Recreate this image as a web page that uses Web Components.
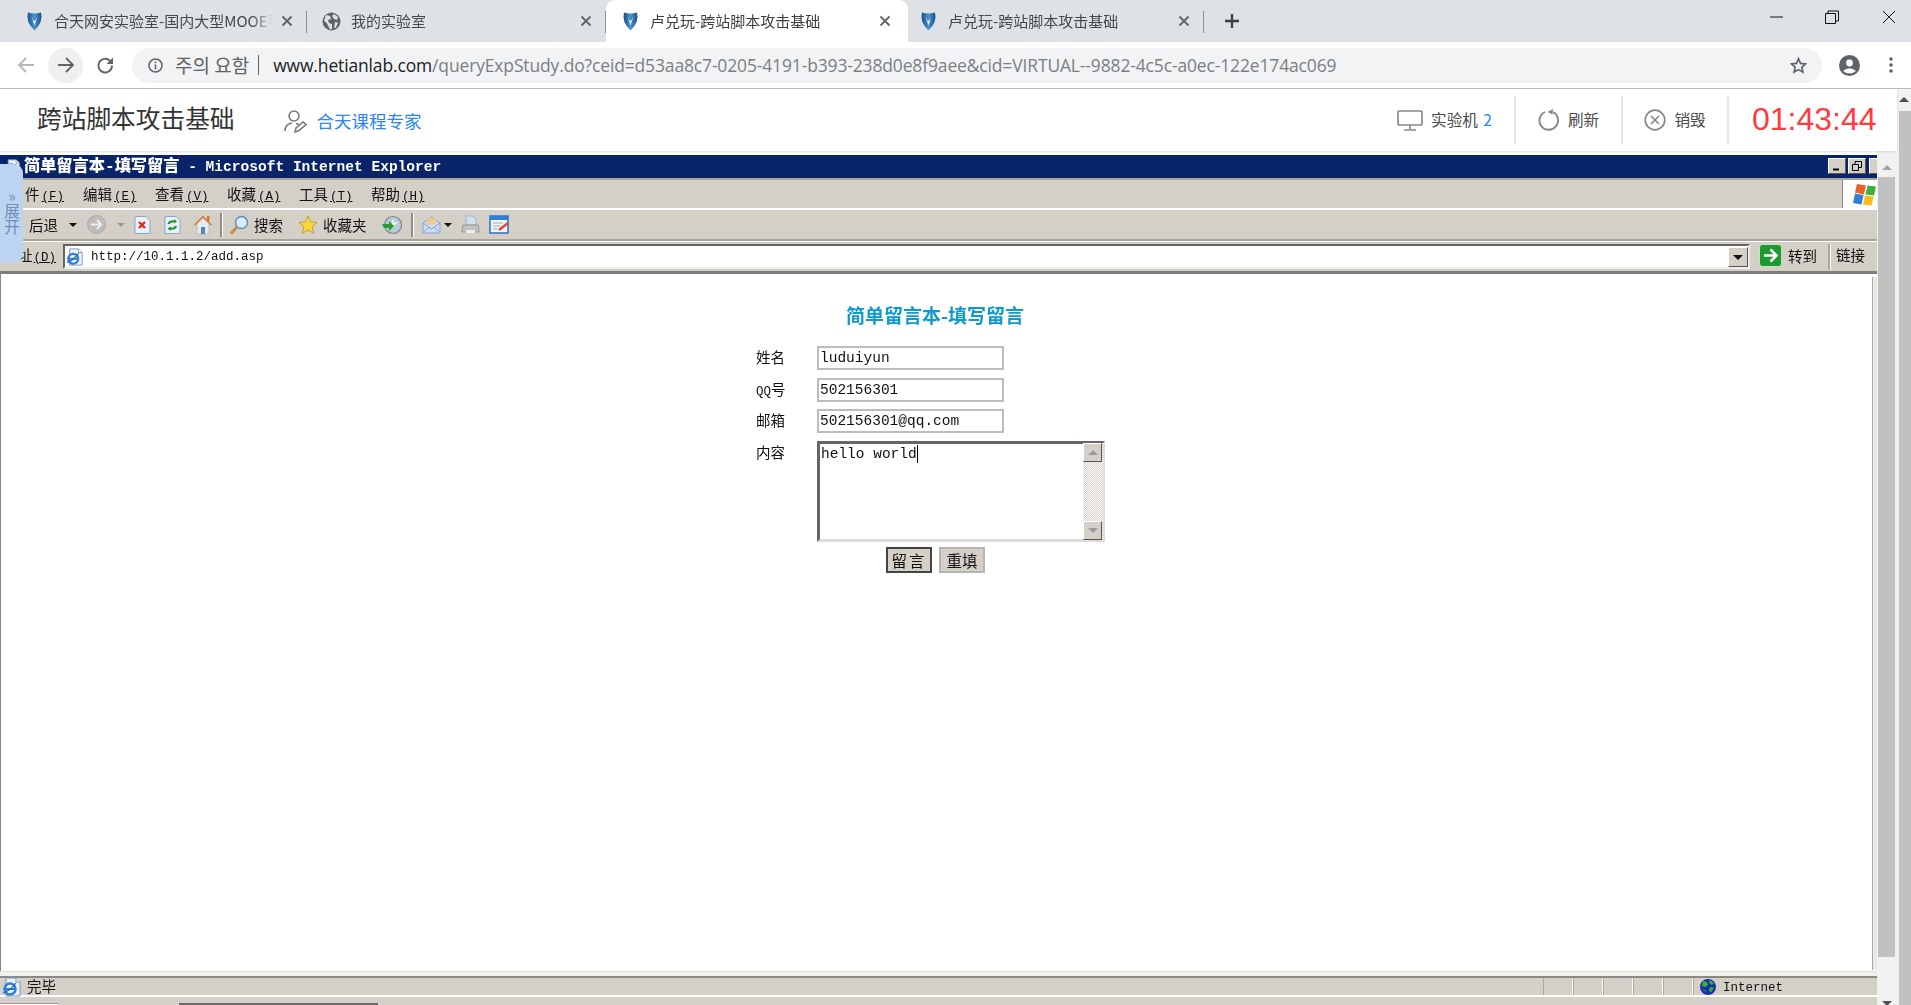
<!DOCTYPE html>
<html lang="zh"><head><meta charset="utf-8"><title>跨站脚本攻击基础</title>
<style>
html,body{margin:0;padding:0;height:1005px;overflow:hidden;background:#fff}
body{font-family:"Noto Sans CJK SC","Noto Sans",sans-serif;display:flex;flex-direction:column}
</style></head><body>
<browser-tabs></browser-tabs>
<browser-bar></browser-bar>
<page-body></page-body>
<script>
const SANS='"Noto Sans CJK SC","Noto Sans",sans-serif';
const MONO='"Liberation Mono","Noto Sans CJK SC",monospace';
const shield=`<svg width="19" height="20" viewBox="0 0 19 20"><defs><linearGradient id="g" x1="0" x2="1"><stop offset="0" stop-color="#174f86"/><stop offset=".5" stop-color="#4f93c9"/><stop offset="1" stop-color="#174f86"/></linearGradient></defs><path d="M3 1.5Q9.500 3.500 16 1.500Q18.500 11 9.500 19.500Q.5 11 3 1.500Z" fill="url(#g)"/><path d="M6.500 5L9.500 14.500L12.500 5L10.500 9.500H8.500Z" fill="#e8f2fa"/></svg>`;
const close=`<svg width="12" height="12" viewBox="0 0 12 12"><path d="M1.500 1.500L10.500 10.500M10.500 1.500L1.500 10.500" stroke="#5f6368" stroke-width="1.800"/></svg>`;
const globe=`<svg width="19" height="19" viewBox="0 0 19 19"><circle cx="9.500" cy="9.500" r="9" fill="#5f6368"/><path d="M4 3l4 1 1 3-3 1 1 3 3 1v5l-2 .5-3-6-3-3zM12 2l4 3-1 3-3-1-2-3zM13 10l3 .5-2 5-2 .5z" fill="#dee1e6"/></svg>`;
const ieE=(s)=>`<svg width="${s}" height="${s}" viewBox="0 0 20 20"><path d="M4 1h10l4 4v14H4z" fill="#eaf2fb" stroke="#7f93b5"/><path d="M14 1v4h4" fill="#fff" stroke="#7f93b5"/><circle cx="8" cy="12" r="5.500" fill="none" stroke="#2b7fd8" stroke-width="2.500"/><path d="M3 12h10" stroke="#2b7fd8" stroke-width="2"/><path d="M1 16Q8 14 14 6" stroke="#1d5fb5" fill="none" stroke-width="1.200"/></svg>`;
function def(name,css,html,after){
  customElements.define(name,class extends HTMLElement{
    constructor(){super();const r=this.attachShadow({mode:'open'});
      r.innerHTML=`<style>${css}</style>${typeof html==='function'?html(this):html}`;}
  });
}

def('tab-item',`
:host{display:flex;align-items:center;box-sizing:border-box;height:42px;position:relative;color:#45484c;font:15px ${SANS};flex:none}
:host([active]){background:#fff;border-radius:9px 9px 0 0;color:#3c4043}
.t{flex:1;margin-left:10px;white-space:nowrap;overflow:hidden;-webkit-mask-image:linear-gradient(90deg,#000 90%,transparent 100%);mask-image:linear-gradient(90deg,#000 90%,transparent 100%);line-height:20px;padding-bottom:1px}
.c{flex:none;width:12px;height:12px;display:flex;margin-left:8px}
.s{position:absolute;right:0;top:11px;height:22px;width:1px;background:#8d9094}
`,h=>`${h.hasAttribute('globe')?globe:shield}<span class="t"><slot></slot></span><span class="c">${close}</span>${h.hasAttribute('sep')?'<span class="s"></span>':''}`);

def('browser-tabs',`
:host{display:flex;height:42px;background:#dee1e6;flex:none;align-items:stretch}
.plus{width:20px;height:20px;margin:11px 0 0 18px}
.sp{flex:1}
.w{display:flex;align-items:center;justify-content:center;padding-bottom:8px;box-sizing:border-box;height:42px;flex:none}
`,`
<tab-item sep style="width:307px;padding:0 14px 0 25px">合天网安实验室-国内大型MOOE平台</tab-item>
<tab-item sep globe style="width:299px;padding:0 14px 0 15px">我的实验室</tab-item>
<tab-item active style="width:302px;padding:0 17px 0 15px">卢兑玩-跨站脚本攻击基础</tab-item>
<tab-item sep style="width:296px;padding:0 14px 0 11px">卢兑玩-跨站脚本攻击基础</tab-item>
<svg class="plus" viewBox="0 0 20 20"><path d="M10 3v14M3 10h14" stroke="#3c4043" stroke-width="2.300"/></svg>
<span class="sp"></span>
<span class="w" style="width:42px"><svg width="14" height="14" viewBox="0 0 14 14"><path d="M1 7H14" stroke="#111"/></svg></span>
<span class="w" style="width:70px"><svg width="14" height="14" viewBox="0 0 14 14"><path d="M.5 3.500h10v10H.5zM3 3.500V1h10.500v10H10.500" fill="none" stroke="#111"/></svg></span>
<span class="w" style="width:44px"><svg width="14" height="14" viewBox="0 0 14 14"><path d="M1 1L13 13M13 1L1 13" stroke="#111"/></svg></span>
`);

def('browser-bar',`
:host{display:flex;align-items:center;height:47px;box-sizing:border-box;border-bottom:1px solid #b9babb;background:#fff;flex:none;padding-bottom:0}
.btn{flex:none;display:flex;align-items:center;justify-content:center;width:35px;height:35px}
.fw{background:#efefef;border-radius:50%}
.omni{flex:none;width:1690px;height:35px;margin-left:9px;border-radius:18px;background:#f1f3f4;display:flex;align-items:center;box-sizing:border-box;padding-left:16px;position:relative}
.warn{font:19px "Noto Sans CJK KR",sans-serif;color:#5f6368;margin-left:12px;white-space:nowrap;line-height:20px}
.bar{width:1px;height:20px;background:#5f6368;margin:0 14px 0 9px}
.url{font:17.460px "Open Sans","Noto Sans",sans-serif;color:#7b7f84;white-space:nowrap;line-height:22px;letter-spacing:-.12px}
.url b{font-weight:400;color:#202124}
.star{position:absolute;right:15px;top:9px}
.p{margin-left:17px;flex:none}
.d{margin-left:29px;flex:none}
`,`
<span class="btn" style="margin-left:8px"><svg width="18" height="18" viewBox="0 0 18 18"><path d="M17 9H2M9 2L2 9l7 7" fill="none" stroke="#b5b7ba" stroke-width="1.800"/></svg></span>
<span class="btn fw" style="margin-left:5px"><svg width="18" height="18" viewBox="0 0 18 18"><path d="M1 9h15M9 2l7 7-7 7" fill="none" stroke="#5f6368" stroke-width="1.800"/></svg></span>
<span class="btn" style="margin-left:5px"><svg width="19" height="19" viewBox="0 0 19 19"><path d="M16 9.500A6.800 6.800 0 1 1 14 4.800" fill="none" stroke="#5f6368" stroke-width="1.900"/><path d="M17 1.500V8H10.500z" fill="#5f6368"/></svg></span>
<div class="omni">
<svg width="15" height="15" viewBox="0 0 15 15"><circle cx="7.500" cy="7.500" r="6.500" fill="none" stroke="#5f6368" stroke-width="1.500"/><path d="M7.500 6.500v5M7.500 3.500v1.800" stroke="#5f6368" stroke-width="1.600"/></svg>
<span class="warn">주의 요함</span><span class="bar"></span>
<span class="url"><b>www.hetianlab.com</b>/queryExpStudy.do?ceid=d53aa8c7-0205-4191-b393-238d0e8f9aee&amp;cid=VIRTUAL--9882-4c5c-a0ec-122e174ac069</span>
<svg class="star" width="17" height="17" viewBox="0 0 24 24"><path d="M12 2.500l2.900 6.500 7.100.7-5.300 4.700 1.500 7-6.200-3.600-6.200 3.600 1.500-7L2 9.700l7.100-.7z" fill="none" stroke="#5f6368" stroke-width="2.400"/></svg>
</div>
<svg class="p" width="21" height="21" viewBox="0 0 21 21"><circle cx="10.500" cy="10.500" r="10.500" fill="#5f6368"/><circle cx="10.500" cy="8" r="3.400" fill="#fff"/><path d="M4 16q6.500-5.500 13 0q-6.500 5-13 0z" fill="#fff"/></svg>
<svg class="d" width="4" height="18" viewBox="0 0 4 18"><circle cx="2" cy="3" r="1.800" fill="#5f6368"/><circle cx="2" cy="9" r="1.800" fill="#5f6368"/><circle cx="2" cy="15" r="1.800" fill="#5f6368"/></svg>
`);

def('lab-action',`
:host{display:flex;align-items:center;justify-content:center;box-sizing:border-box;height:48px;font:15.600px ${SANS};color:#4a4a4a;border-right:2px solid #e6e6e6;gap:8px;white-space:nowrap;flex:none}
span{margin-top:-2px}
`,`<slot name="i"></slot><span><slot></slot></span>`);

def('lab-header',`
:host{display:flex;align-items:center;height:62px;flex:none;background:#fff;box-sizing:border-box;padding-left:37px;box-shadow:0 1px 2px rgba(0,0,0,.12);position:relative;z-index:1}
.title{font:24.700px/30px ${SANS};color:#333;white-space:nowrap;margin-top:-6px}
.exp{margin-left:49px;display:flex;align-items:center;gap:10px;color:#2a85f5;font:17.500px/22px ${SANS};white-space:nowrap;padding-top:2px}
.sp{flex:1}
.time{width:168px;box-sizing:border-box;padding-left:23px;color:#ff3b3f;font:32px/34px "Liberation Sans",Arial,sans-serif;white-space:nowrap;margin-top:-2px}
.two{color:#2a85f5;margin-left:2px}
`,`
<span class="title">跨站脚本攻击基础</span>
<span class="exp"><svg width="23" height="24" viewBox="0 0 23 24"><circle cx="10" cy="7" r="5" fill="none" stroke="#777" stroke-width="1.500"/><path d="M1 22q0-7 7-8M12 14.500q2 .5 3 1.500" fill="none" stroke="#777" stroke-width="1.500"/><path d="M11 23l1-4 7-6 3 2.500-7 6z" fill="none" stroke="#777" stroke-width="1.500"/></svg>合天课程专家</span>
<span class="sp"></span>
<lab-action style="width:141px"><svg slot="i" width="26" height="21" viewBox="0 0 26 21"><rect x="1" y="1" width="24" height="14" rx="1" fill="none" stroke="#888" stroke-width="1.700"/><path d="M13 15v4M7 20h12" stroke="#888" stroke-width="1.700"/></svg>实验机 <span class="two">2</span></lab-action>
<lab-action style="width:107px"><svg slot="i" width="22" height="22" viewBox="0 0 22 22"><path d="M15 3.200A9.300 9.300 0 1 1 7 3" fill="none" stroke="#888" stroke-width="1.900"/><path d="M15 0l-.5 5.500L9.500 3z" fill="#888"/></svg>刷新</lab-action>
<lab-action style="width:106px"><svg slot="i" width="22" height="22" viewBox="0 0 22 22"><circle cx="11" cy="11" r="9.800" fill="none" stroke="#888" stroke-width="1.700"/><path d="M7 7l8 8M15 7l-8 8" stroke="#888" stroke-width="1.700"/></svg>销毁</lab-action>
<span class="time">01:43:44</span>
`);

def('scroll-rail',`
:host{display:block;background:#f1f1f1;flex:none;position:relative;box-sizing:border-box}
.up,.down{width:0;height:0;position:absolute;left:50%;margin-left:-5px;border:5px solid transparent;border-top:0}
.up{border-bottom:5px solid var(--arrow,#a3a3a3);top:var(--up,13px)}
.down{border:5px solid transparent;border-bottom:0;border-top:5px solid #505050;bottom:-1px}
.thumb{position:absolute;background:#c1c1c1;top:var(--top);bottom:var(--bottom);left:var(--l);right:var(--r)}
`,h=>`<div class="up"></div><div class="thumb"></div>${h.hasAttribute('down')?'<div class="down"></div>':''}`);

def('ie-title',`
:host{display:flex;align-items:center;height:23px;background:#0a246a;color:#fff;font:bold 14.550px/20px ${MONO};white-space:pre;flex:none;padding-left:5px;box-sizing:border-box;position:relative}
.txt{margin-left:3px}
.txt b{font-size:16.200px}
.b{position:absolute;top:3px;width:18px;height:16px;background:#d4d0c8;border:1px solid;border-color:#fff #555 #555 #fff;box-sizing:border-box;display:flex;align-items:center;justify-content:center}
`,`${ieE(16)}<span class="txt"><b>简单留言本-填写留言</b> - Microsoft Internet Explorer</span>
<span class="b" style="left:1828px"><svg width="10" height="10" viewBox="0 0 10 10"><path d="M1 8.500h6" stroke="#000" stroke-width="2"/></svg></span>
<span class="b" style="left:1848px"><svg width="10" height="10" viewBox="0 0 10 10"><path d="M.5 3.500h6v6h-6zM3 3V.5h6.500v6H7" fill="none" stroke="#000"/></svg></span>
<span class="b" style="left:1869px"></span>`);

def('ie-menu',`
:host{display:flex;align-items:center;height:32px;box-sizing:border-box;background:#d4d0c8;border-top:2px solid #a7a49d;border-bottom:2px solid #fff;flex:none;padding-left:25px;font:14.500px/20px ${SANS};color:#111;white-space:nowrap;position:relative}
span{margin-right:21px;width:51px}
span.f{width:37px}
u{font:12.500px ${MONO};margin-left:2px}
.logo{position:absolute;left:1842px;top:0;bottom:0;width:40px;background:#fff;display:flex;align-items:center;padding-left:10px;box-sizing:border-box;border-left:1px solid #888}
`,`<span class="f">件<u>(F)</u></span><span>编辑<u>(E)</u></span><span>查看<u>(V)</u></span><span>收藏<u>(A)</u></span><span>工具<u>(T)</u></span><span>帮助<u>(H)</u></span>
<div class="logo"><svg width="24" height="26" viewBox="0 0 24 26"><path d="M4 3l9 1.500-2 9-9-2z" fill="#e5602b"/><path d="M14.500 4.500l8.500 1-2 9-8.500-1z" fill="#3fae3b"/><path d="M2 12.500l8.500 1.500-2 9.500L0 22z" fill="#2f80d4"/><path d="M12 14.500l8.500 1-2 9-8.500-1z" fill="#f6bc1c"/></svg></div>`);

const tb={
 fw:`<svg width="19" height="19" viewBox="0 0 19 19"><circle cx="9.500" cy="9.500" r="9" fill="#bdbdb8" stroke="#aaa"/><path d="M4 9.500h10M10 5l4 4.500-4 4.500" fill="none" stroke="#eee" stroke-width="2"/></svg>`,
 stop:`<svg width="17" height="18" viewBox="0 0 17 18"><path d="M1 .5h11l4 4v13H1z" fill="#e9f1fb" stroke="#8ea5c9"/><path d="M5 6l6 6M11 6l-6 6" stroke="#dd2b1c" stroke-width="2.400"/></svg>`,
 ref:`<svg width="17" height="18" viewBox="0 0 17 18"><path d="M1 .5h11l4 4v13H1z" fill="#e9f1fb" stroke="#8ea5c9"/><path d="M4.500 8q1-3.500 6.500-2.500M12 10q-1 3.500-6.500 2.500" fill="none" stroke="#1c9a2c" stroke-width="2.200"/><path d="M10 3l3 2.500-3 2zM6.500 15l-3-2.500 3-2z" fill="#1c9a2c"/></svg>`,
 home:`<svg width="20" height="20" viewBox="0 0 20 20"><path d="M1 10L10 1l9 9" fill="#e88a35" stroke="#d77a2a"/><path d="M4 9l6-6 6 6v10H4z" fill="#e4ebf3" stroke="#a9b3c0" stroke-width=".700"/><rect x="8" y="12" width="4" height="7" fill="#5a83b8"/><rect x="14" y="1" width="2.500" height="5" fill="#d77a2a"/></svg>`,
 search:`<svg width="20" height="20" viewBox="0 0 20 20"><circle cx="12.500" cy="7.500" r="6" fill="#dcecfa" stroke="#5c8fbf" stroke-width="1.500"/><path d="M8 12L2 18.500" stroke="#c98a3a" stroke-width="3"/></svg>`,
 star:`<svg width="20" height="20" viewBox="0 0 20 20"><path d="M10 1l2.700 6 6.300.6-4.800 4.300 1.400 6.400L10 15l-5.600 3.300 1.400-6.400L1 7.600 7.300 7z" fill="#fbd63e" stroke="#c6a22e"/></svg>`,
 hist:`<svg width="20" height="20" viewBox="0 0 20 20"><circle cx="11" cy="10" r="8.500" fill="#b9cbd6" stroke="#7d8a86" stroke-width="1.200"/><path d="M11 5v5l4-3" stroke="#fff" stroke-width="1.500" fill="none"/><path d="M1 11h7v-3l5 5-5 5v-3H3z" fill="#2c9b36" transform="translate(-1 -2)"/></svg>`,
 mail:`<svg width="19" height="19" viewBox="0 0 19 19"><path d="M1 8L9.500 2 18 8v10H1z" fill="#c9dcf5" stroke="#8aa3d2"/><rect x="5" y="3.500" width="9" height="6" fill="#f4c98b"/><path d="M1 8l8.500 6L18 8M1 18l6-6M18 18l-6-6" fill="none" stroke="#8aa3d2"/></svg>`,
 print:`<svg width="19" height="19" viewBox="0 0 19 19"><path d="M5 1h7l3 3v6H5z" fill="#cfe0f3" stroke="#99a9bc" stroke-width=".800"/><path d="M2 10h15l1 4v3H1v-3z" fill="#c2c4c2" stroke="#8a8c8c" stroke-width=".800"/><rect x="5" y="15" width="9" height="3" fill="#eee"/></svg>`,
 edit:`<svg width="21" height="19" viewBox="0 0 21 19"><rect x="1" y="1" width="18" height="17" fill="#f2f5fa" stroke="#2a71c4" stroke-width="1.500"/><rect x="1" y="1" width="18" height="4" fill="#2a80d5"/><path d="M4 8h10M4 11h7M4 14h5" stroke="#9aa"/><path d="M10 15L19 8" stroke="#d8473a" stroke-width="2.500"/></svg>`
};
def('ie-toolbar',`
:host{display:flex;align-items:center;height:31px;box-sizing:border-box;background:#d4d0c8;border-bottom:2px solid #a7a49d;flex:none;padding-left:29px;font:14.500px/20px ${SANS};color:#111;white-space:nowrap}
.a{width:0;height:0;border:4px solid transparent;border-top:4px solid #111;border-bottom:0;flex:none}
.g{border-top-color:#9a9892}
.s{width:2px;height:24px;background:#8f8d87;border-right:1px solid #fff;flex:none}
svg{flex:none}
`,`<span>后退</span><i class="a" style="margin-left:11px"></i>
<span style="margin-left:10px;display:flex">${tb.fw}</span><i class="a g" style="margin-left:11px"></i>
<span style="margin-left:9px;display:flex">${tb.stop}</span><span style="margin-left:13px;display:flex">${tb.ref}</span>
<span style="margin-left:12px;display:flex">${tb.home}</span><i class="s" style="margin-left:7px"></i>
<span style="margin-left:6px;display:flex">${tb.search}</span><span style="margin-left:5px">搜索</span>
<span style="margin-left:15px;display:flex">${tb.star}</span><span style="margin-left:5px">收藏夹</span>
<span style="margin-left:15px;display:flex">${tb.hist}</span><i class="s" style="margin-left:9px"></i>
<span style="margin-left:8px;display:flex">${tb.mail}</span><i class="a" style="margin-left:3px"></i>
<span style="margin-left:9px;display:flex">${tb.print}</span><span style="margin-left:9px;display:flex">${tb.edit}</span>`);

def('ie-address',`
:host{display:flex;align-items:center;height:30px;box-sizing:border-box;background:#d4d0c8;flex:none;border-top:1px solid #fff;font:14.500px/20px ${SANS};color:#111;white-space:nowrap;padding-left:18px}
u{font:12.500px ${MONO};margin-left:1px}
.lab{width:45px;flex:none;margin-top:-4px}
.box{width:1687px;height:25px;background:#fff;box-sizing:border-box;border:2px solid;border-color:#666 #eee #eee #666;display:flex;align-items:center;padding-left:1px;flex:none;font:12.500px ${MONO};position:relative}
.box span{margin-left:7px}
.dd{position:absolute;right:0;top:1px;width:20px;height:20px;background:#d4d0c8;border:1px solid;border-color:#fff #555 #555 #fff;box-sizing:border-box;display:flex;align-items:center;justify-content:center}
.dd i{border:5px solid transparent;border-top:5px solid #111;border-bottom:0}
.go{flex:none;margin-left:9px;display:flex;align-items:center;gap:6px;width:69px;margin-top:-2px}
.sep{flex:none;width:2px;height:26px;background:#aaa7a0;border-right:1px solid #fff}
.link{margin-left:5px;margin-top:-4px}
`,`<span class="lab">址<u>(D)</u></span>
<div class="box">${ieE(18)}<span>http://10.1.1.2/add.asp</span><div class="dd"><i></i></div></div>
<div class="go"><svg width="23" height="23" viewBox="0 0 23 23"><rect x=".5" y=".5" width="22" height="22" rx="3" fill="#1f9a2e" stroke="#bfe6bf"/><path d="M5 11.500h12M11.500 5.500l6 6-6 6" fill="none" stroke="#fff" stroke-width="2.600"/></svg><span>转到</span></div>
<i class="sep"></i><span class="link">链接</span>`);

def('form-row',`
:host{display:contents}
.l{font:14.500px/22px ${SANS};color:#111;white-space:nowrap}
`,`<div class="l"><slot name="l"></slot></div><slot></slot>`);

def('form-field',`
:host{display:block;width:187px;height:24px;box-sizing:border-box;border:2px solid #bdbdbd;font:14.500px/20px ${MONO};color:#111;padding-left:1px;white-space:nowrap}
`,`<slot></slot>`);

def('form-area',`
:host{display:block;width:288px;height:101px;box-sizing:border-box;border:3px solid;border-color:#666 #ddd #ddd #666;font:14.500px/18px ${MONO};color:#111;position:relative;padding:1px 0 0 1px;white-space:nowrap}
.caret{display:inline-block;width:1px;height:18px;background:#000;vertical-align:top}
.rail{position:absolute;right:-1px;top:-1px;bottom:-1px;width:20px;background:repeating-conic-gradient(#d4d0c8 0 25%,#fff 0 50%) 0 0/2px 2px}
.b{position:absolute;left:0;width:19px;height:19px;background:#d4d0c8;border:1px solid;border-color:#fff #555 #555 #fff;box-sizing:border-box;display:flex;align-items:center;justify-content:center}
.u{border:5px solid transparent;border-bottom:5px solid #999;border-top:0}
.d{border:5px solid transparent;border-top:5px solid #999;border-bottom:0}
`,`<slot></slot><span class="caret"></span><div class="rail"><div class="b" style="top:0"><i class="u"></i></div><div class="b" style="bottom:0"><i class="d"></i></div></div>`);

def('form-button',`
:host{display:flex;align-items:center;justify-content:center;width:46px;height:26px;box-sizing:border-box;background:#d4d0c8;border:2px solid #b8b6b0;font:15.500px/20px ${SANS};color:#111;letter-spacing:0}
:host([primary]){border:2px solid #444;letter-spacing:2px}
`,`<slot></slot>`);

def('guest-form',`
:host{display:block;flex:1;background:#fff;position:relative;border-left:1px solid #888;padding:31px 8px 0 0;box-sizing:border-box}
h1{margin:0 0 22px;height:19px;font:bold 19px/19px ${SANS};color:#0d9bcf;text-align:center;white-space:nowrap}
.g{display:grid;grid-template-columns:61px auto;grid-auto-rows:min-content;row-gap:7.600px;width:349px;margin:0 0 0 755px;align-items:start}
.btns{grid-column:2;display:flex;gap:7px;margin:-2px 0 0 69px}
.q{font:12.500px/18px ${MONO}}
.stub{position:absolute;right:0;top:3px;bottom:1px;width:5px;background:#ece9e2;border-left:1px solid #aaa;box-sizing:border-box}
`,`<h1>简单留言本-填写留言</h1>
<div class="g">
<form-row><span slot="l">姓名</span><form-field>luduiyun</form-field></form-row>
<form-row><span slot="l"><span class="q">QQ</span>号</span><form-field>502156301</form-field></form-row>
<form-row><span slot="l">邮箱</span><form-field>502156301@qq.com</form-field></form-row>
<form-row><span slot="l">内容</span><form-area>hello world</form-area></form-row>
<div class="btns"><form-button primary>留言</form-button><form-button>重填</form-button></div>
</div><div class="stub"></div>`);

def('ie-status',`
:host{display:flex;align-items:center;height:21px;box-sizing:border-box;background:#d4d0c8;border-top:2px solid #8b8985;border-bottom:2px solid #fff;flex:none;font:14.500px/17px ${SANS};color:#111;white-space:nowrap;padding-left:2px}
.t{margin:-2px 0 0 5px;flex:1}
.p{flex:none;width:30px;height:17px;box-sizing:border-box;border-left:1px solid #aaa7a0;border-right:1px solid #fff}
.net{flex:none;width:184px;height:17px;box-sizing:border-box;border-left:1px solid #aaa7a0;display:flex;align-items:center;padding-left:6px;gap:7px;font:12.500px ${MONO}}
.net span{margin-top:3px}
`,`${ieE(20)}<span class="t">完毕</span><i class="p"></i><i class="p"></i><i class="p"></i><i class="p"></i><i class="p"></i>
<div class="net"><svg width="16" height="16" viewBox="0 0 16 16"><circle cx="8" cy="8" r="8" fill="#1730a8"/><path d="M3 2l4 1 1 3-3 2-3-1zM10 1l4 3-2 2-3-2zM10 8l4 .500-3 5-2-2zM2 10l3 1 1 2z" fill="#35b52f"/></svg><span>Internet</span></div>`);

def('ie-foot',`
:host{display:flex;height:9px;background:#d4d0c8;flex:none;position:relative;overflow:hidden}
.a{width:58px;height:3px;margin-top:6px;background:#fbfaf7;border-top:1px solid #999;box-sizing:border-box}
.b{margin:6px 0 0 121px;width:199px;height:3px;background:#6a6a6a}
`,`<div class="a"></div><div class="b"></div>`);

def('ie-window',`
:host{display:flex;flex-direction:column;height:855px;width:1877px;overflow:hidden;flex:none;filter:blur(.35px);box-sizing:border-box;padding-top:4px;background:#fff}
.r{flex:none}
.bot{height:5px;flex:none;background:#f2f0ea;box-sizing:border-box;border-top:1px solid #ddd}
`,`<ie-title></ie-title><ie-menu></ie-menu><ie-toolbar></ie-toolbar><ie-address></ie-address><div class="r" style="height:3px;background:#7d7c79"></div><guest-form></guest-form><div class="bot"></div><ie-status></ie-status><ie-foot></ie-foot>`);

def('expand-tab',`
:host{position:absolute;left:0;top:13px;width:23px;height:99px;background:#bcd4f2;border-radius:0 9px 9px 0;z-index:3;display:flex;justify-content:center;padding-top:24px;box-sizing:border-box;font:15.500px/23px ${SANS};color:#6f8db5}
span{writing-mode:vertical-rl;text-orientation:upright;white-space:nowrap}
`,`<span>»展开</span>`);

def('page-body',`
:host{display:flex;flex:1;min-height:0;background:#f1f1f1}
.main{width:1897px;flex:none;display:flex;flex-direction:column}
.row{display:flex;flex:1;position:relative;min-height:0}
`,`<div class="main"><lab-header></lab-header><div class="row"><ie-window></ie-window><scroll-rail down style="width:20px;--up:14px;--top:26px;--bottom:48px;--l:1px;--r:2px"></scroll-rail><expand-tab></expand-tab></div></div>
<scroll-rail style="width:14px;--up:8px;--arrow:#505050;--top:22px;--bottom:0;--l:2px;--r:0"></scroll-rail>`);
</script>
</body></html>
